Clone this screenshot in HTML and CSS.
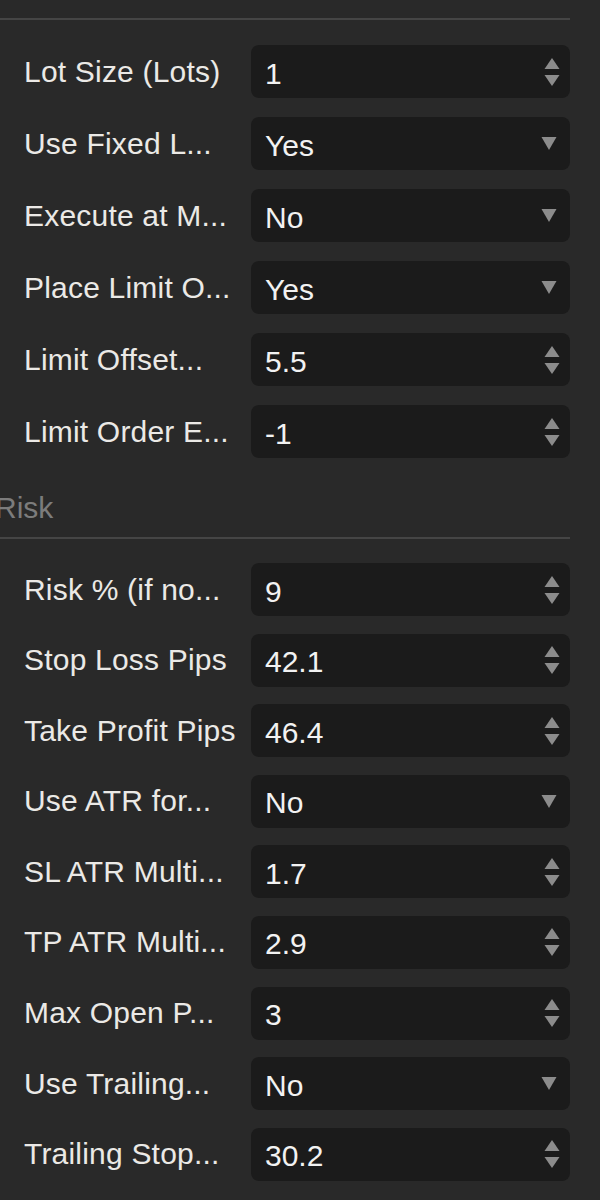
FILE: index.html
```html
<!DOCTYPE html>
<html lang="en">
<head>
    <meta charset="UTF-8">
    <meta name="viewport" content="width=device-width, initial-scale=1.0">
    <title>Parameters</title>
    <link rel="stylesheet" href="styles.css">
</head>
<body>
    <div class="panel">
        <div class="rule"></div>

        <div class="group group-trade">
            <div class="row">
                <div class="label">Lot Size (Lots)</div>
                <div class="field">
                    <span class="value">1</span>
                    <svg class="spin" width="16" height="28" viewBox="0 0 16 28"><path d="M8 0 L15.5 11 L0.5 11 Z"/><path d="M0.5 17 L15.5 17 L8 28 Z"/></svg>
                </div>
            </div>
            <div class="row">
                <div class="label">Use Fixed L...</div>
                <div class="field">
                    <span class="value">Yes</span>
                    <svg class="drop" width="16" height="13" viewBox="0 0 16 13"><path d="M0.5 0 L15.5 0 L8 13 Z"/></svg>
                </div>
            </div>
            <div class="row">
                <div class="label">Execute at M...</div>
                <div class="field">
                    <span class="value">No</span>
                    <svg class="drop" width="16" height="13" viewBox="0 0 16 13"><path d="M0.5 0 L15.5 0 L8 13 Z"/></svg>
                </div>
            </div>
            <div class="row">
                <div class="label">Place Limit O...</div>
                <div class="field">
                    <span class="value">Yes</span>
                    <svg class="drop" width="16" height="13" viewBox="0 0 16 13"><path d="M0.5 0 L15.5 0 L8 13 Z"/></svg>
                </div>
            </div>
            <div class="row">
                <div class="label">Limit Offset...</div>
                <div class="field">
                    <span class="value">5.5</span>
                    <svg class="spin" width="16" height="28" viewBox="0 0 16 28"><path d="M8 0 L15.5 11 L0.5 11 Z"/><path d="M0.5 17 L15.5 17 L8 28 Z"/></svg>
                </div>
            </div>
            <div class="row">
                <div class="label">Limit Order E...</div>
                <div class="field">
                    <span class="value">-1</span>
                    <svg class="spin" width="16" height="28" viewBox="0 0 16 28"><path d="M8 0 L15.5 11 L0.5 11 Z"/><path d="M0.5 17 L15.5 17 L8 28 Z"/></svg>
                </div>
            </div>
        </div>

        <h3 class="group-title">Risk</h3>
        <div class="rule"></div>

        <div class="group group-risk">
            <div class="row">
                <div class="label">Risk % (if no...</div>
                <div class="field">
                    <span class="value">9</span>
                    <svg class="spin" width="16" height="28" viewBox="0 0 16 28"><path d="M8 0 L15.5 11 L0.5 11 Z"/><path d="M0.5 17 L15.5 17 L8 28 Z"/></svg>
                </div>
            </div>
            <div class="row">
                <div class="label">Stop Loss Pips</div>
                <div class="field">
                    <span class="value">42.1</span>
                    <svg class="spin" width="16" height="28" viewBox="0 0 16 28"><path d="M8 0 L15.5 11 L0.5 11 Z"/><path d="M0.5 17 L15.5 17 L8 28 Z"/></svg>
                </div>
            </div>
            <div class="row">
                <div class="label">Take Profit Pips</div>
                <div class="field">
                    <span class="value">46.4</span>
                    <svg class="spin" width="16" height="28" viewBox="0 0 16 28"><path d="M8 0 L15.5 11 L0.5 11 Z"/><path d="M0.5 17 L15.5 17 L8 28 Z"/></svg>
                </div>
            </div>
            <div class="row">
                <div class="label">Use ATR for...</div>
                <div class="field">
                    <span class="value">No</span>
                    <svg class="drop" width="16" height="13" viewBox="0 0 16 13"><path d="M0.5 0 L15.5 0 L8 13 Z"/></svg>
                </div>
            </div>
            <div class="row">
                <div class="label">SL ATR Multi...</div>
                <div class="field">
                    <span class="value">1.7</span>
                    <svg class="spin" width="16" height="28" viewBox="0 0 16 28"><path d="M8 0 L15.5 11 L0.5 11 Z"/><path d="M0.5 17 L15.5 17 L8 28 Z"/></svg>
                </div>
            </div>
            <div class="row">
                <div class="label">TP ATR Multi...</div>
                <div class="field">
                    <span class="value">2.9</span>
                    <svg class="spin" width="16" height="28" viewBox="0 0 16 28"><path d="M8 0 L15.5 11 L0.5 11 Z"/><path d="M0.5 17 L15.5 17 L8 28 Z"/></svg>
                </div>
            </div>
            <div class="row">
                <div class="label">Max Open P...</div>
                <div class="field">
                    <span class="value">3</span>
                    <svg class="spin" width="16" height="28" viewBox="0 0 16 28"><path d="M8 0 L15.5 11 L0.5 11 Z"/><path d="M0.5 17 L15.5 17 L8 28 Z"/></svg>
                </div>
            </div>
            <div class="row">
                <div class="label">Use Trailing...</div>
                <div class="field">
                    <span class="value">No</span>
                    <svg class="drop" width="16" height="13" viewBox="0 0 16 13"><path d="M0.5 0 L15.5 0 L8 13 Z"/></svg>
                </div>
            </div>
            <div class="row">
                <div class="label">Trailing Stop...</div>
                <div class="field">
                    <span class="value">30.2</span>
                    <svg class="spin" width="16" height="28" viewBox="0 0 16 28"><path d="M8 0 L15.5 11 L0.5 11 Z"/><path d="M0.5 17 L15.5 17 L8 28 Z"/></svg>
                </div>
            </div>
        </div>
    </div>
</body>
</html>
```

FILE: styles.css
```css
* {
    margin: 0;
    padding: 0;
    box-sizing: border-box;
}

body {
    background-color: #292929;
    font-family: "Liberation Sans", Arial, sans-serif;
    overflow: hidden;
}

.panel {
    padding: 18px 30px 0 0;
}

.rule {
    height: 2px;
    background-color: #454545;
}

.group {
    display: flex;
    flex-direction: column;
    padding-left: 24px;
}

.group-trade {
    padding-top: 25px;
    gap: 19px;
}

.group-risk {
    padding-top: 24px;
    gap: 17.6px;
}

.row {
    display: flex;
    align-items: center;
    gap: 15px;
}

.label {
    width: 212px;
    flex-shrink: 0;
    color: #ebe9e6;
    font-size: 30px;
    letter-spacing: 0.2px;
    white-space: nowrap;
    overflow: hidden;
    text-overflow: ellipsis;
}

.field {
    flex: 1;
    height: 53px;
    display: flex;
    align-items: center;
    justify-content: space-between;
    padding: 0 10px 0 14px;
    background-color: #1b1b1b;
    border-radius: 8px;
}

.value {
    color: #f2f2f2;
    font-size: 30px;
    padding-top: 4px;
}

.spin,
.drop {
    fill: #8c8c8c;
}

.drop {
    margin-right: 3px;
}

.group-title {
    margin: 33px 0 12px -5px;
    color: #7c7c7c;
    font-size: 30px;
    font-weight: normal;
    line-height: 34px;
}
```
